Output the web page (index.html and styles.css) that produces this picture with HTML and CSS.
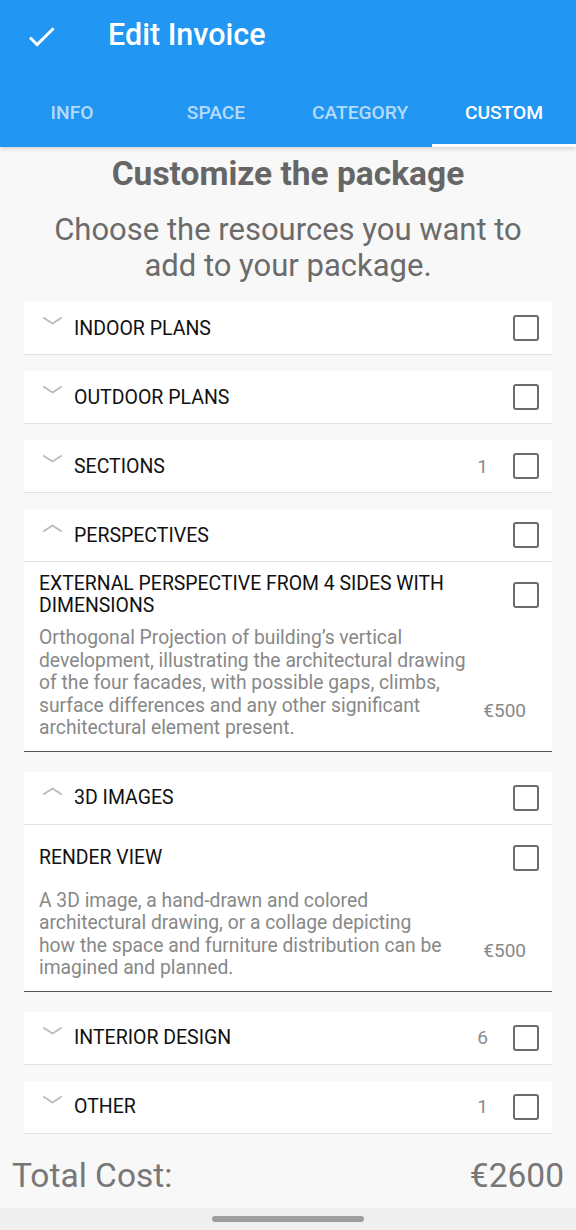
FILE: index.html
```html
<!DOCTYPE html>
<html lang="en">
<head>
<meta charset="utf-8">
<title>Edit Invoice</title>
<link rel="stylesheet" href="styles.css">
</head>
<body>
<div class="screen">
  <header class="appbar">
    <div class="toolbar">
      <svg class="check-icon" viewBox="0 0 24 24" width="35" height="35"><path fill="#fff" d="M9 16.17L4.83 12l-1.42 1.41L9 19 21 7l-1.41-1.41z"/></svg>
      <h1 class="toolbar-title">Edit Invoice</h1>
    </div>
    <nav class="tabs">
      <div class="tab">INFO</div>
      <div class="tab">SPACE</div>
      <div class="tab">CATEGORY</div>
      <div class="tab active">CUSTOM</div>
    </nav>
  </header>

  <main class="content">
    <h2 class="title">Customize the package</h2>
    <p class="subtitle">Choose the resources you want to<br>add to your package.</p>

    <section class="group">
      <div class="row">
        <svg class="chev" viewBox="0 0 19 8" width="19" height="8"><polyline points="1,1 9.5,6.5 18,1"/></svg>
        <span class="label">INDOOR PLANS</span>
        <span class="box"></span>
      </div>
    </section>

    <section class="group">
      <div class="row">
        <svg class="chev" viewBox="0 0 19 8" width="19" height="8"><polyline points="1,1 9.5,6.5 18,1"/></svg>
        <span class="label">OUTDOOR PLANS</span>
        <span class="box"></span>
      </div>
    </section>

    <section class="group">
      <div class="row">
        <svg class="chev" viewBox="0 0 19 8" width="19" height="8"><polyline points="1,1 9.5,6.5 18,1"/></svg>
        <span class="label">SECTIONS</span>
        <span class="count">1</span>
        <span class="box"></span>
      </div>
    </section>

    <section class="group open">
      <div class="row">
        <svg class="chev" viewBox="0 0 19 8" width="19" height="8"><polyline points="1,7 9.5,1.5 18,7"/></svg>
        <span class="label">PERSPECTIVES</span>
        <span class="box"></span>
      </div>
      <div class="detail">
        <div class="detail-head">EXTERNAL PERSPECTIVE FROM 4 SIDES WITH DIMENSIONS</div>
        <span class="box"></span>
        <div class="detail-body">
          <p class="desc">Orthogonal Projection of building’s vertical development, illustrating the architectural drawing of the four facades, with possible gaps, climbs, surface differences and any other significant architectural element present.</p>
          <span class="price">€500</span>
        </div>
      </div>
    </section>

    <section class="group open">
      <div class="row">
        <svg class="chev" viewBox="0 0 19 8" width="19" height="8"><polyline points="1,7 9.5,1.5 18,7"/></svg>
        <span class="label">3D IMAGES</span>
        <span class="box"></span>
      </div>
      <div class="detail">
        <div class="detail-head">RENDER VIEW</div>
        <span class="box"></span>
        <div class="detail-body">
          <p class="desc narrow">A 3D image, a hand-drawn and colored architectural drawing, or a collage depicting how the space and furniture distribution can be imagined and planned.</p>
          <span class="price">€500</span>
        </div>
      </div>
    </section>

    <section class="group">
      <div class="row">
        <svg class="chev" viewBox="0 0 19 8" width="19" height="8"><polyline points="1,1 9.5,6.5 18,1"/></svg>
        <span class="label">INTERIOR DESIGN</span>
        <span class="count">6</span>
        <span class="box"></span>
      </div>
    </section>

    <section class="group last">
      <div class="row">
        <svg class="chev" viewBox="0 0 19 8" width="19" height="8"><polyline points="1,1 9.5,6.5 18,1"/></svg>
        <span class="label">OTHER</span>
        <span class="count">1</span>
        <span class="box"></span>
      </div>
    </section>

    <div class="total">
      <span>Total Cost:</span>
      <span>€2600</span>
    </div>
  </main>

  <div class="navbar"><span class="handle"></span></div>
</div>
</body>
</html>
```

FILE: styles.css
```css
* { box-sizing: border-box; }

html, body {
  margin: 0;
  padding: 0;
}

body {
  font-family: Roboto, "Noto Sans", "Liberation Sans", sans-serif;
  background: #f8f8f8;
  color: #111;
}

.screen {
  width: 576px;
  height: 1230px;
  display: flex;
  flex-direction: column;
  overflow: hidden;
}

/* App bar */
.appbar {
  background: #2196f3;
  box-shadow: 0 2px 4px rgba(0, 0, 0, 0.14);
  position: relative;
  z-index: 1;
  flex: none;
}

.toolbar {
  height: 70px;
  display: flex;
  align-items: center;
}

.check-icon {
  margin-left: 24px;
  margin-top: 2px;
}

.toolbar-title {
  margin: 0 0 0 49px;
  font-size: 30.5px;
  font-weight: 500;
  color: #fff;
  line-height: 36px;
}

.tabs {
  height: 77px;
  display: grid;
  grid-template-columns: repeat(4, 1fr);
  padding-top: 7px;
}

.tab {
  display: flex;
  align-items: center;
  justify-content: center;
  font-size: 19.2px;
  font-weight: 500;
  color: rgba(255, 255, 255, 0.68);
  border-bottom: 3px solid transparent;
  padding-top: 3px;
}

.tab.active {
  color: #fff;
  border-bottom-color: #fff;
}

/* Content */
.content {
  flex: 1;
  min-height: 0;
  padding: 0 24px;
  display: flex;
  flex-direction: column;
}

.title {
  margin: 9px 0 0;
  text-align: center;
  font-size: 33.5px;
  font-weight: 700;
  line-height: 36px;
  color: #666;
}

.subtitle {
  margin: 20px 0 18px;
  text-align: center;
  font-size: 31px;
  line-height: 36px;
  font-weight: 400;
  color: #6b6b6b;
}

.group {
  margin-bottom: 16px;
}

.group.open {
  margin-bottom: 20px;
}

.group.last {
  margin-bottom: 0;
}

.row {
  height: 53px;
  background: #fff;
  border-bottom: 1px solid #e2e2e2;
  display: flex;
  align-items: center;
  padding: 0 13px 0 19px;
}

.chev {
  align-self: flex-start;
  margin-top: 15px;
  fill: none;
  stroke: #bcbcbc;
  stroke-width: 2;
  stroke-linecap: round;
  stroke-linejoin: round;
}

.label {
  margin-left: 12px;
  font-size: 19.5px;
  color: #111;
  flex: 1;
}

.count {
  font-size: 19px;
  color: #8c8c8c;
  margin-right: 25px;
}

.box {
  width: 26px;
  height: 26px;
  border: 2.5px solid #6b6b6b;
  border-radius: 3px;
  flex: none;
}

.detail {
  background: #fff;
  border-bottom: 1.5px solid #555;
  display: grid;
  grid-template-columns: 1fr 26px;
  padding: 11px 13px 11px 15px;
}

.detail-head {
  min-height: 44px;
  display: flex;
  align-items: center;
  font-size: 19.4px;
  line-height: 22px;
  color: #111;
  padding-right: 30px;
}

.detail .box {
  align-self: center;
}

.detail-body {
  grid-column: 1 / -1;
  display: flex;
  margin-top: 10px;
}

.desc {
  margin: 0;
  width: 432px;
  font-size: 19.3px;
  line-height: 22.5px;
  color: #888;
}

.desc.narrow {
  width: 408px;
}

.price {
  margin-left: auto;
  margin-right: 13px;
  margin-bottom: 18px;
  align-self: flex-end;
  font-size: 19px;
  line-height: 22px;
  color: #888;
}

.total {
  margin: 22px -12px 0;
  display: flex;
  justify-content: space-between;
  font-size: 33.5px;
  line-height: 40px;
  color: #777;
}

.navbar {
  height: 22px;
  background: #efefef;
  display: flex;
  justify-content: center;
  padding-top: 8px;
  flex: none;
}

.handle {
  width: 152px;
  height: 6px;
  border-radius: 3px;
  background: #9e9e9e;
}
```
